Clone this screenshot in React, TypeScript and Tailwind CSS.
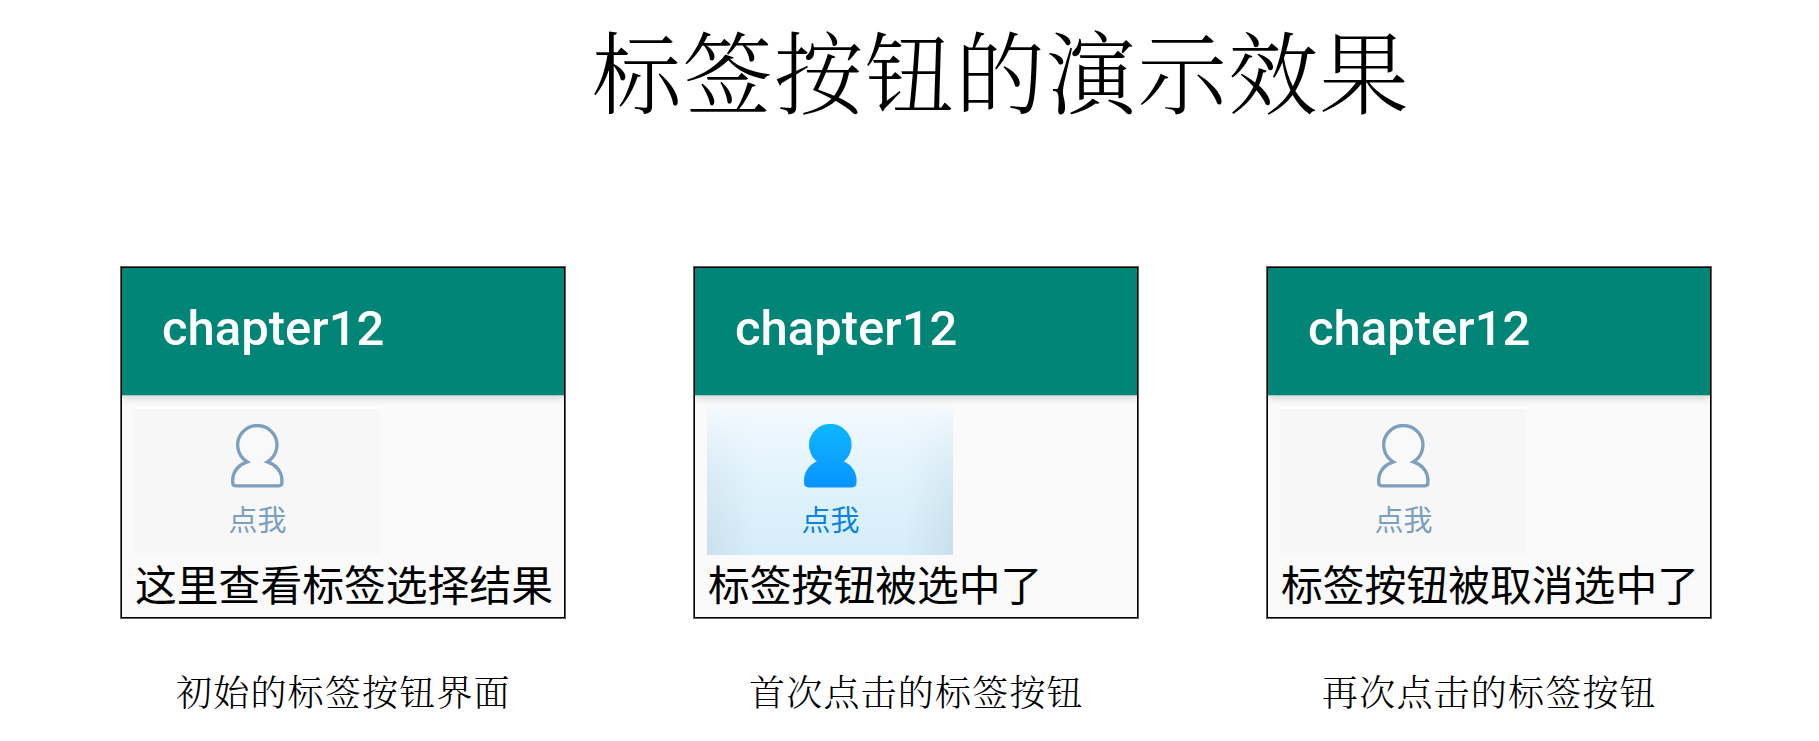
const screens = [
  { caption: '初始的标签按钮界面', result: '这里查看标签选择结果', checked: false },
  { caption: '首次点击的标签按钮', result: '标签按钮被选中了', checked: true },
  { caption: '再次点击的标签按钮', result: '标签按钮被取消选中了', checked: false },
]

const personPath =
  'M17.2 37.9 A19.6 19.6 0 1 1 37.4 37.9 C45.5 40.5 51.9 47 51.9 56.2 V58.6 Q51.9 61.8 48.7 61.8 H5.9 Q2.7 61.8 2.7 58.6 V56.2 C2.7 47 9.1 40.5 17.2 37.9 Z'

function PersonIcon({ filled }: { filled: boolean }) {
  return (
    <svg width="55" height="65" viewBox="0 0 55 65" className="relative shrink-0">
      <defs>
        <linearGradient id="person-fill" x1="0" y1="0" x2="0" y2="1">
          <stop offset="0" stopColor="#0db6ff" />
          <stop offset="1" stopColor="#0894ff" />
        </linearGradient>
      </defs>
      <path
        d={personPath}
        fill={filled ? 'url(#person-fill)' : '#f9f9f9'}
        stroke={filled ? 'url(#person-fill)' : '#7c9fbe'}
        strokeWidth="3.3"
      />
    </svg>
  )
}

function TabButton({ checked }: { checked: boolean }) {
  return (
    <div
      className={
        checked
          ? 'relative w-[246px] h-[148px] pt-[17px] pl-px flex flex-col items-center bg-linear-to-b from-[#f3f9fe] via-[#e1f3fc] to-[#d5edfa]'
          : 'relative w-[246px] h-[148px] pt-[15px] pl-px flex flex-col items-center bg-[#f7f7f7] border-t-2 border-white'
      }
    >
      {checked && (
        <>
          <div className="absolute inset-y-0 left-0 w-[48px] bg-linear-to-r from-[#c8dce7] to-transparent mask-t-from-10% opacity-70" />
          <div className="absolute inset-y-0 right-0 w-[48px] bg-linear-to-l from-[#c8dce7] to-transparent mask-t-from-10% opacity-80" />
        </>
      )}
      <PersonIcon filled={checked} />
      <span
        className={
          checked
            ? 'relative mt-[9px] text-[29px] leading-[40px] text-[#0a84e0]'
            : 'relative mt-[9px] text-[29px] leading-[40px] text-[#7c9fbe]'
        }
      >
        点我
      </span>
    </div>
  )
}

export default function App() {
  return (
    <div className="w-[1819px] h-[741px] overflow-hidden bg-white text-black font-['Noto_Sans_CJK_SC',sans-serif]">
      <h1 className="h-[267px] pl-[592px] pt-[14px] text-[89.5px] leading-[110px] tracking-[1.4px] whitespace-nowrap font-light font-['SimSun','Noto_Serif_CJK_SC','Noto_Sans_CJK_SC',serif]">
        标签按钮的演示效果
      </h1>

      <div className="flex gap-[129px] pl-[121px]">
        {screens.map(s => (
          <figure key={s.caption} className="w-[444px] shrink-0">
            <div className="h-[351px] bg-[#fafafa] border border-black ring-1 ring-[#606060]">
              <div className="h-[127px] pl-[40px] flex items-center bg-[#008577] shadow-[0_1px_0_#9fcac4,0_2px_9px_rgba(0,0,0,0.2)] [clip-path:inset(0_0_-16px_0)]">
                <span className="pb-[6px] text-[49px] leading-[58px] font-medium text-white font-['Roboto',sans-serif]">chapter12</span>
              </div>
              <div className="pl-[12px] pt-[12px]">
                <TabButton checked={s.checked} />
                <p className="-mt-[1px] pl-px text-[41.8px] leading-[58px] whitespace-nowrap">{s.result}</p>
              </div>
            </div>
            <figcaption className="mt-[48px] pl-[55px] text-[36px] leading-[50px] tracking-[1.2px] whitespace-nowrap font-light font-['SimSun','Noto_Serif_CJK_SC','Noto_Sans_CJK_SC',serif]">
              {s.caption}
            </figcaption>
          </figure>
        ))}
      </div>
    </div>
  )
}
